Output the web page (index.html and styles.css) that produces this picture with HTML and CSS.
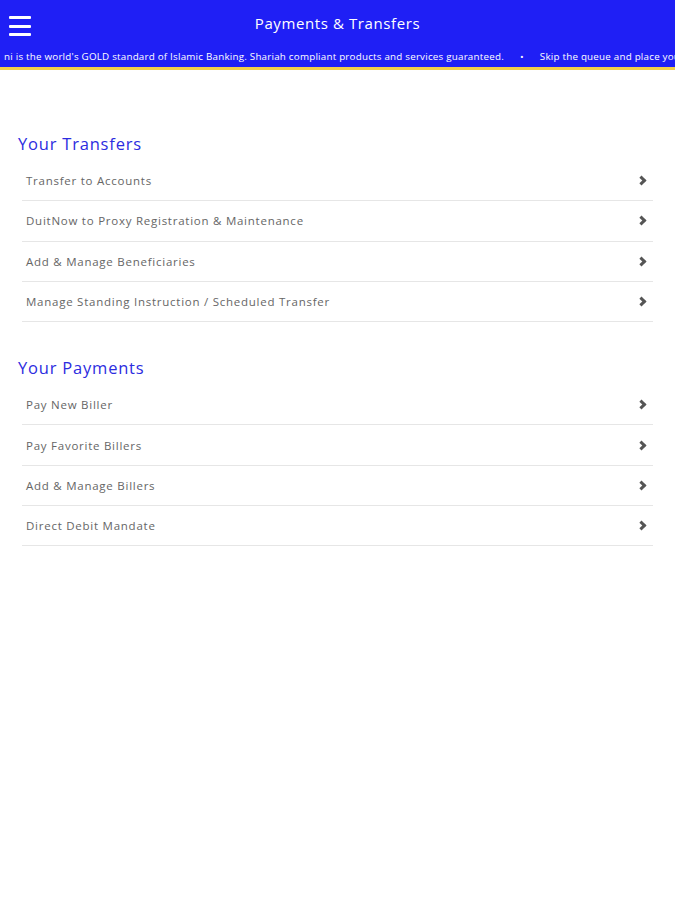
FILE: index.html
```html
<!DOCTYPE html>
<html lang="en">

<head>
    <meta charset="utf-8">
    <meta name="viewport" content="width=device-width, initial-scale=1.0">
    <title>Payments &amp; Transfers</title>

    <link rel="stylesheet" href="styles.css">
</head>

<body>

    <header>
        <div class="topbar">
            <button class="menu" aria-label="Menu">
                <span></span><span></span><span></span>
            </button>
            <h1>Payments &amp; Transfers</h1>
        </div>
        <div class="ticker">
            <span>ni is the world's GOLD standard of Islamic Banking. Shariah compliant products and services guaranteed.</span>
            <span class="dot">&bull;</span>
            <span>Skip the queue and place your order online.</span>
        </div>
    </header>

    <main>
        <section class="gruppe">
            <h2>Your Transfers</h2>
            <ul class="liste">
                <li>Transfer to Accounts<i class="pil"></i></li>
                <li>DuitNow to Proxy Registration &amp; Maintenance<i class="pil"></i></li>
                <li>Add &amp; Manage Beneficiaries<i class="pil"></i></li>
                <li>Manage Standing Instruction / Scheduled Transfer<i class="pil"></i></li>
            </ul>
        </section>

        <section class="gruppe">
            <h2>Your Payments</h2>
            <ul class="liste">
                <li>Pay New Biller<i class="pil"></i></li>
                <li>Pay Favorite Billers<i class="pil"></i></li>
                <li>Add &amp; Manage Billers<i class="pil"></i></li>
                <li>Direct Debit Mandate<i class="pil"></i></li>
            </ul>
        </section>
    </main>

</body>

</html>
```

FILE: styles.css
```css
body * {
    box-sizing: border-box;
}

body {
    margin: 0;
    padding: 0;
    background-color: white;
    font-family: "Open Sans", "Liberation Sans", sans-serif;
}

header {
    background-color: #1f1ff5;
    border-bottom: 3px solid #f2cf4a;
}

.topbar {
    height: 46px;
    display: flex;
    align-items: center;
    justify-content: center;
    position: relative;
}

.menu {
    position: absolute;
    left: 9px;
    top: 16px;
    width: 22px;
    height: 20px;
    padding: 0;
    border: 0;
    background: none;
    display: flex;
    flex-direction: column;
    justify-content: space-between;
}

.menu span {
    display: block;
    height: 3px;
    width: 22px;
    background-color: white;
    border-radius: 1px;
}

h1 {
    margin: 0;
    color: white;
    font-size: 15px;
    font-weight: 500;
    letter-spacing: 0.6px;
}

.ticker {
    height: 21px;
    padding-left: 4px;
    color: white;
    font-size: 9.8px;
    font-weight: 500;
    letter-spacing: 0.22px;
    white-space: nowrap;
    overflow: hidden;
    display: flex;
    align-items: center;
    gap: 16px;
}

main {
    padding-top: 63px;
}

.gruppe {
    margin-bottom: 35px;
}

h2 {
    margin: 0 0 6px 18px;
    color: #2c2ce0;
    font-size: 16.5px;
    font-weight: 400;
    letter-spacing: 0.8px;
    line-height: 22px;
}

.liste {
    list-style: none;
    margin: 0 22px;
    padding: 0;
}

.liste li {
    height: 40.3px;
    padding: 0 4px;
    border-bottom: 1.5px solid #e6e6e6;
    display: flex;
    align-items: center;
    justify-content: space-between;
    color: #666;
    font-size: 11.5px;
    letter-spacing: 0.75px;
}

.pil {
    width: 7px;
    height: 7px;
    margin-right: 4px;
    border-top: 3px solid #555;
    border-right: 3px solid #555;
    transform: rotate(45deg);
}
```
